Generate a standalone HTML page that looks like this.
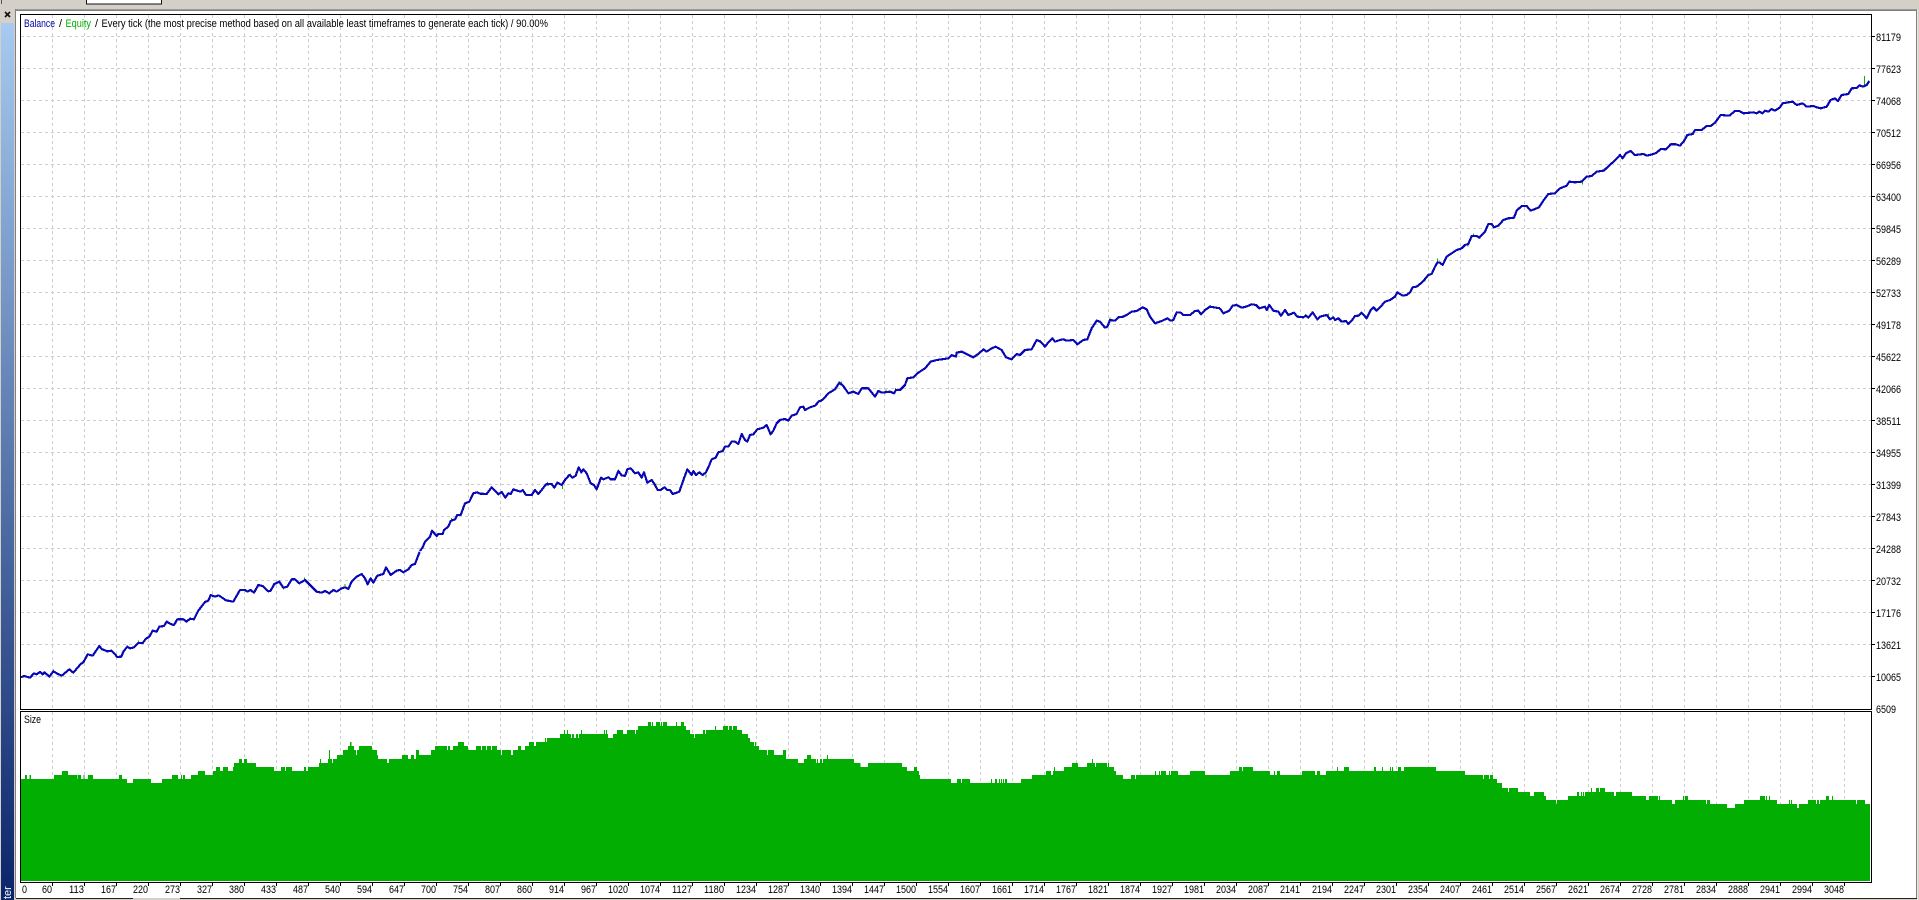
<!DOCTYPE html>
<html>
<head>
<meta charset="utf-8">
<title>Strategy Tester Graph</title>
<style>
html,body{margin:0;padding:0;background:#d4d0c8;overflow:hidden}
svg{display:block;position:absolute;left:0;top:0}
text{font-family:"Liberation Sans",sans-serif;font-size:11px;fill:#000}
</style>
</head>
<body>
<svg width="1919" height="900" viewBox="0 0 1919 900" xmlns="http://www.w3.org/2000/svg">
<defs>
<linearGradient id="cap" x1="0" y1="0" x2="0" y2="1">
<stop offset="0" stop-color="#a6caf0"/>
<stop offset="1" stop-color="#0a246a"/>
</linearGradient>
</defs>
<rect width="1919" height="900" fill="#d4d0c8"/>
<!-- top tab -->
<rect x="86.5" y="-2" width="75" height="6" fill="#fff" stroke="#111" stroke-width="1"/>
<rect x="1" y="0" width="1" height="4" fill="#555"/>
<!-- sidebar -->
<rect x="1" y="23" width="13" height="877" fill="url(#cap)"/>
<path d="M5 12l5 5m0-5l-5 5" stroke="#111" stroke-width="1.6" fill="none"/>
<text transform="translate(11 899) rotate(-90)" style="fill:#fff;font-size:11px">ter</text>
<!-- main white frame -->
<rect x="16" y="11" width="1900" height="887" fill="#fff"/>
<rect x="15" y="9" width="1902" height="1" fill="#9a9a9a"/>
<rect x="15" y="10" width="1902" height="1" fill="#808080"/>
<rect x="15" y="9" width="1" height="889" fill="#808080"/>
<rect x="1916" y="9" width="1" height="889" fill="#808080"/>
<rect x="1917" y="9" width="1" height="891" fill="#ece9e2"/>
<rect x="16" y="898" width="117" height="1" fill="#222"/>
<rect x="180" y="898" width="1737" height="1" fill="#222"/>
<!-- grid -->
<g fill="none" stroke="#cdcdcd" stroke-width="1" stroke-dasharray="3 3" shape-rendering="crispEdges">
<path d="M21 36.5h1850m-1850 32h1850m-1850 32h1850m-1850 32h1850m-1850 32h1850m-1850 32h1850m-1850 32h1850m-1850 32h1850m-1850 32h1850m-1850 32h1850m-1850 32h1850m-1850 32h1850m-1850 32h1850m-1850 32h1850m-1850 32h1850m-1850 32h1850m-1850 32h1850m-1850 32h1850m-1850 32h1850m-1850 32h1850m-1850 32h1850"/>
<path d="M52.5 15v694m32-694v694m32-694v694m32-694v694m32-694v694m32-694v694m32-694v694m32-694v694m32-694v694m32-694v694m32-694v694m32-694v694m32-694v694m32-694v694m32-694v694m32-694v694m32-694v694m32-694v694m32-694v694m32-694v694m32-694v694m32-694v694m32-694v694m32-694v694m32-694v694m32-694v694m32-694v694m32-694v694m32-694v694m32-694v694m32-694v694m32-694v694m32-694v694m32-694v694m32-694v694m32-694v694m32-694v694m32-694v694m32-694v694m32-694v694m32-694v694m32-694v694m32-694v694m32-694v694m32-694v694m32-694v694m32-694v694m32-694v694m32-694v694m32-694v694m32-694v694m32-694v694m32-694v694m32-694v694m32-694v694m32-694v694"/>
<path d="M52.5 712v169m32-169v169m32-169v169m32-169v169m32-169v169m32-169v169m32-169v169m32-169v169m32-169v169m32-169v169m32-169v169m32-169v169m32-169v169m32-169v169m32-169v169m32-169v169m32-169v169m32-169v169m32-169v169m32-169v169m32-169v169m32-169v169m32-169v169m32-169v169m32-169v169m32-169v169m32-169v169m32-169v169m32-169v169m32-169v169m32-169v169m32-169v169m32-169v169m32-169v169m32-169v169m32-169v169m32-169v169m32-169v169m32-169v169m32-169v169m32-169v169m32-169v169m32-169v169m32-169v169m32-169v169m32-169v169m32-169v169m32-169v169m32-169v169m32-169v169m32-169v169m32-169v169m32-169v169m32-169v169m32-169v169m32-169v169m32-169v169"/>
</g>
<!-- green size histogram -->
<g fill="#02ae02" shape-rendering="crispEdges">
<path transform="translate(0 640) scale(.33333)" d="M62 417H75V405H81V417H88V405H93V417H162V405H186V393H204V405H232V417H234V405H243V417H250V405H254V417H264V405H279V417H357V405H366V417H381V429H399V417H453V429H486V417H516V405H534V417H543V405H546V417H549V405H555V417H573V405H594V393H615V405H639V393H648V381H660V393H669V381H684V393H699V381H702V369H717V357H726V369H732V357H741V369H768V381H822V393H843V381H855V393H858V381H876V393H912V381H918V393H924V381H957V369H960V357H963V369H984V357H987V330H990V357H996V369H999V357H1011V345H1029V330H1044V318H1050V306H1055V318H1062V330H1068V345H1071V330H1077V318H1116V330H1131V345H1134V357H1161V369H1167V357H1206V345H1224V357H1233V345H1242V357H1248V330H1257V345H1272V345H1293V330H1305V318H1341V330H1344V318H1350V330H1359V318H1374V306H1392V318H1404V330H1428V318H1441V723H62Z"/>
<path transform="translate(480 710) scale(.33333)" d="M0 108H3V120H6V108H18V120H21V108H33V120H36V108H51V120H63V135H66V120H93V135H99V120H114V108H123V120H135V108H147V96H162V108H168V96H195V84H198V96H201V84H240V72H252V60H255V72H261V60H264V72H273V84H276V72H282V84H288V72H294V84H297V72H303V60H306V72H372V60H375V72H378V60H381V72H384V84H399V72H411V60H429V72H441V60H465V72H468V60H474V48H504V36H513V48H516V36H519V48H528V36H540V48H543V36H546V48H549V36H561V48H588V36H591V48H603V36H612V48H618V60H630V72H642V84H645V72H669V60H675V72H678V60H705V48H708V60H729V48H744V60H747V48H756V60H759V48H771V60H786V72H804V84H810V96H822V108H825V96H828V108H837V120H861V135H864V120H882V135H909V120H918V147H954V159H972V147H981V135H993V147H1008V159H1011V147H1014V159H1020V147H1026V159H1029V147H1041V135H1044V147H1122V159H1141V513H0Z"/>
<path transform="translate(860 710) scale(.33333)" d="M0 171H24V159H126V171H141V183H162V171H171V183H177V195H180V207H273V219H291V207H303V219H306V207H330V219H393V207H396V219H405V207H411V219H417V207H420V219H423V207H426V219H429V207H432V219H435V207H441V219H483V207H516V195H558V183H573V195H579V183H582V171H585V183H612V171H636V159H654V171H681V159H696V147H699V159H705V171H708V159H741V171H744V159H747V171H762V183H768V195H789V207H813V195H825V207H828V195H885V183H888V195H897V183H900V195H903V183H918V195H927V183H930V195H933V183H954V195H990V183H1035V195H1110V183H1137V171H1141V513H0Z"/>
<path transform="translate(1240 710) scale(.33333)" d="M0 171H6V183H9V171H39V183H90V195H102V183H105V195H111V183H120V195H186V183H225V195H231V183H240V195H258V183H291V171H294V183H312V171H327V183H402V171H408V183H426V171H429V183H450V171H453V183H456V171H459V183H474V171H483V183H492V171H588V183H675V195H729V207H732V195H747V207H750V195H759V207H771V219H786V234H804V246H807V234H834V246H870V258H882V246H912V258H918V270H948V282H951V270H984V258H1011V246H1017V258H1023V246H1026V258H1029V246H1032V258H1035V246H1053V234H1056V246H1068V234H1077V246H1080V234H1095V246H1122V258H1128V246H1141V513H0Z"/>
<path transform="translate(1600 680) scale(.33333)" d="M0 324H15V336H42V348H48V336H96V348H138V360H147V348H174V360H177V348H180V360H216V372H225V360H249V348H252V360H255V348H264V360H318V372H321V360H330V372H381V384H405V372H432V360H480V348H495V360H498V348H501V360H507V348H510V360H531V372H567V360H570V372H573V360H576V372H591V384H597V372H624V360H648V372H651V360H657V372H660V360H678V348H687V360H696V348H699V360H768V372H771V360H795V372H810V603H0Z"/>
</g>
<!-- equity ticks -->
<g fill="none" stroke="#04b004" stroke-width="3" shape-rendering="crispEdges">
<path transform="translate(20 540) scale(.33333)" d="M100 388v8M123 404v8M245 324v8M355 302v8M853 113v10M975 132v10M790 140v8"/>
<path transform="translate(420 390) scale(.33333)" d="M94 384v8M382 276v8M427 288v9M436 264v8M452 250v8M596 238v8M708 280v8M782 286v8M858 254v8"/>
<path transform="translate(820 300) scale(.33333)" d="M65 244v8M198 268v8M226 264v8M662 120v8M870 52v8M1170 15v8"/>
<path transform="translate(1220 170) scale(.33333)" d="M50 400v8M256 432v8M325 430v8M652 266v10M615 326v8M686 252v8M744 222v8M760 190v8M816 160v8M1087 34v9"/>
<path transform="translate(1600 0) scale(.33333)" d="M793 228v30"/>
</g>
<!-- balance line -->
<g fill="none" stroke="#0808b4" stroke-width="6.5" stroke-linejoin="round" shape-rendering="crispEdges">
<polyline transform="translate(20 540) scale(.33333)" points="3,412 12,408 30,413 42,400 50,403 60,396 68,403 74,397 88,410 100,394 110,400 125,407 148,388 160,398 182,372 190,367 203,343 218,347 238,318 245,327 262,334 275,332 292,351 304,350 310,335 322,320 330,325 342,322 355,309 368,309 378,296 388,290 398,272 410,275 418,260 432,258 440,245 452,252 462,255 472,238 490,238 500,245 510,236 522,238 535,212 555,186 565,182 572,165 585,170 596,166 605,172 618,181 640,185 660,150 675,150 682,155 692,150 702,158 715,135 728,138 745,154 752,152 763,132 778,125 790,143 802,140 815,118 825,118 838,130 855,120 865,130 880,145 890,155 905,158 915,153 928,160 940,150 950,155 965,145 975,142 985,147 995,125 1010,110 1025,102 1035,115 1043,133 1052,115 1060,128 1072,107 1090,102 1098,82 1112,105 1130,92 1140,90 1150,97 1165,88 1175,75 1185,72 1198,38 1200,36"/>
<polyline transform="translate(420 390) scale(.33333)" points="0,483 8,472 15,455 30,440 36,422 50,438 55,432 68,432 72,420 85,410 92,393 105,388 112,375 122,375 135,340 148,335 160,310 172,307 180,311 200,312 215,292 225,302 235,313 245,306 256,323 265,310 272,312 280,298 292,302 302,305 308,300 318,315 335,315 345,300 355,312 365,300 378,283 395,282 403,293 412,278 425,285 435,270 448,255 458,263 467,257 476,232 484,247 490,238 500,250 512,280 522,285 530,298 543,263 550,268 565,262 572,268 585,268 595,243 605,256 615,258 622,238 632,235 645,250 655,247 665,263 672,247 682,278 695,270 705,285 713,300 722,300 733,292 742,300 750,300 758,312 770,308 778,305 785,285 793,262 802,238 815,255 820,243 828,255 838,247 848,255 858,247 868,225 875,208 887,203 895,187 908,183 915,170 925,170 935,155 945,155 955,162 965,132 975,150 982,155 990,135 1000,133 1012,118 1030,113 1040,105 1052,133 1060,122 1070,100 1080,90 1095,87 1105,92 1115,77 1130,72 1140,52 1150,50 1155,60 1170,52 1185,47 1198,33 1200,33"/>
<polyline transform="translate(820 300) scale(.33333)" points="0,305 12,295 25,280 45,268 58,248 70,258 85,280 100,275 115,282 125,265 145,265 165,290 175,273 185,278 210,275 222,280 228,270 240,270 255,255 262,235 280,232 295,218 315,205 332,185 350,180 365,178 385,175 395,165 408,170 410,158 425,155 445,165 460,172 475,162 490,148 500,155 515,145 527,140 545,150 558,172 575,178 590,162 600,165 615,150 635,148 650,120 662,125 675,140 685,127 697,115 705,125 720,120 730,118 740,122 760,120 772,133 790,120 802,118 815,85 830,62 840,65 855,83 862,80 870,60 885,62 895,52 910,50 920,45 935,35 950,33 968,22 980,28 990,50 1005,70 1025,63 1042,55 1052,62 1060,60 1070,37 1082,38 1090,45 1110,45 1125,33 1135,32 1143,43 1155,30 1170,20 1200,25"/>
<polyline transform="translate(1220 170) scale(.33333)" points="0,415 10,430 28,422 38,407 50,405 65,413 78,410 95,403 108,405 118,415 135,410 140,420 148,405 160,422 175,425 183,437 195,420 205,435 222,428 232,440 250,442 258,437 265,443 278,427 292,448 300,440 320,435 330,448 340,442 345,450 355,445 365,455 378,453 385,462 395,452 405,438 415,437 425,428 440,445 452,420 460,412 470,422 480,412 495,395 510,390 525,380 532,367 548,377 560,375 570,367 578,352 590,350 605,338 615,327 625,315 635,312 645,290 652,278 660,278 668,285 680,260 695,250 710,240 725,235 735,225 745,222 755,198 770,198 778,203 795,185 805,162 815,162 822,172 835,167 850,150 865,145 882,143 890,122 905,108 920,108 932,122 945,117 957,112 970,92 985,72 1005,70 1020,55 1040,47 1048,35 1065,37 1085,35 1100,20 1115,18 1130,5 1150,2 1155,0"/>
<polyline transform="translate(1600 0) scale(.33333)" points="10,513 48,478 60,465 68,475 78,460 92,453 105,465 130,462 140,467 160,462 170,458 182,447 198,448 212,433 228,433 240,437 252,423 262,405 278,402 285,390 305,390 320,378 332,378 345,368 362,345 388,347 405,333 418,333 430,340 460,337 470,340 478,335 488,340 495,332 505,335 515,327 525,332 540,322 548,310 565,307 578,305 590,315 608,310 620,320 640,318 650,322 662,325 680,320 692,300 705,295 714,303 725,285 745,282 755,265 770,264 778,256 790,260 800,255 808,243"/>
</g>
<!-- borders -->
<g fill="none" stroke="#000" stroke-width="1" shape-rendering="crispEdges">
<rect x="20.5" y="14.5" width="1851" height="695"/>
<rect x="20.5" y="711.5" width="1851" height="171"/>
<path d="M1872 36.5h3m-3 32h3m-3 32h3m-3 32h3m-3 32h3m-3 32h3m-3 32h3m-3 32h3m-3 32h3m-3 32h3m-3 32h3m-3 32h3m-3 32h3m-3 32h3m-3 32h3m-3 32h3m-3 32h3m-3 32h3m-3 32h3m-3 32h3m-3 32h3"/>
<path d="M52.5 883v3m32-3v3m32-3v3m32-3v3m32-3v3m32-3v3m32-3v3m32-3v3m32-3v3m32-3v3m32-3v3m32-3v3m32-3v3m32-3v3m32-3v3m32-3v3m32-3v3m32-3v3m32-3v3m32-3v3m32-3v3m32-3v3m32-3v3m32-3v3m32-3v3m32-3v3m32-3v3m32-3v3m32-3v3m32-3v3m32-3v3m32-3v3m32-3v3m32-3v3m32-3v3m32-3v3m32-3v3m32-3v3m32-3v3m32-3v3m32-3v3m32-3v3m32-3v3m32-3v3m32-3v3m32-3v3m32-3v3m32-3v3m32-3v3m32-3v3m32-3v3m32-3v3m32-3v3m32-3v3m32-3v3m32-3v3m32-3v3"/>
</g>
<!-- header text -->
<text x="24" y="27" textLength="31" lengthAdjust="spacingAndGlyphs" style="fill:#0000a8">Balance</text>
<text x="59" y="27">/</text>
<text x="65.5" y="27" textLength="25.5" lengthAdjust="spacingAndGlyphs" style="fill:#00b000">Equity</text>
<text x="95" y="27">/</text>
<text x="101.5" y="27" textLength="446.5" lengthAdjust="spacingAndGlyphs">Every tick (the most precise method based on all available least timeframes to generate each tick) / 90.00%</text>
<text x="24" y="723" textLength="17" lengthAdjust="spacingAndGlyphs">Size</text>
<!-- y axis -->
<g>
<text x="1876" y="41" textLength="25" lengthAdjust="spacingAndGlyphs">81179</text>
<text x="1876" y="73" textLength="25" lengthAdjust="spacingAndGlyphs">77623</text>
<text x="1876" y="105" textLength="25" lengthAdjust="spacingAndGlyphs">74068</text>
<text x="1876" y="137" textLength="25" lengthAdjust="spacingAndGlyphs">70512</text>
<text x="1876" y="169" textLength="25" lengthAdjust="spacingAndGlyphs">66956</text>
<text x="1876" y="201" textLength="25" lengthAdjust="spacingAndGlyphs">63400</text>
<text x="1876" y="233" textLength="25" lengthAdjust="spacingAndGlyphs">59845</text>
<text x="1876" y="265" textLength="25" lengthAdjust="spacingAndGlyphs">56289</text>
<text x="1876" y="297" textLength="25" lengthAdjust="spacingAndGlyphs">52733</text>
<text x="1876" y="329" textLength="25" lengthAdjust="spacingAndGlyphs">49178</text>
<text x="1876" y="361" textLength="25" lengthAdjust="spacingAndGlyphs">45622</text>
<text x="1876" y="393" textLength="25" lengthAdjust="spacingAndGlyphs">42066</text>
<text x="1876" y="425" textLength="25" lengthAdjust="spacingAndGlyphs">38511</text>
<text x="1876" y="457" textLength="25" lengthAdjust="spacingAndGlyphs">34955</text>
<text x="1876" y="489" textLength="25" lengthAdjust="spacingAndGlyphs">31399</text>
<text x="1876" y="521" textLength="25" lengthAdjust="spacingAndGlyphs">27843</text>
<text x="1876" y="553" textLength="25" lengthAdjust="spacingAndGlyphs">24288</text>
<text x="1876" y="585" textLength="25" lengthAdjust="spacingAndGlyphs">20732</text>
<text x="1876" y="617" textLength="25" lengthAdjust="spacingAndGlyphs">17176</text>
<text x="1876" y="649" textLength="25" lengthAdjust="spacingAndGlyphs">13621</text>
<text x="1876" y="681" textLength="25" lengthAdjust="spacingAndGlyphs">10065</text>
<text x="1876" y="713" textLength="20" lengthAdjust="spacingAndGlyphs">6509</text>
</g>
<!-- x axis -->
<g>
<text x="22" y="893" textLength="5" lengthAdjust="spacingAndGlyphs">0</text>
<text x="42" y="893" textLength="10" lengthAdjust="spacingAndGlyphs">60</text>
<text x="69" y="893" textLength="15" lengthAdjust="spacingAndGlyphs">113</text>
<text x="101" y="893" textLength="15" lengthAdjust="spacingAndGlyphs">167</text>
<text x="133" y="893" textLength="15" lengthAdjust="spacingAndGlyphs">220</text>
<text x="165" y="893" textLength="15" lengthAdjust="spacingAndGlyphs">273</text>
<text x="197" y="893" textLength="15" lengthAdjust="spacingAndGlyphs">327</text>
<text x="229" y="893" textLength="15" lengthAdjust="spacingAndGlyphs">380</text>
<text x="261" y="893" textLength="15" lengthAdjust="spacingAndGlyphs">433</text>
<text x="293" y="893" textLength="15" lengthAdjust="spacingAndGlyphs">487</text>
<text x="325" y="893" textLength="15" lengthAdjust="spacingAndGlyphs">540</text>
<text x="357" y="893" textLength="15" lengthAdjust="spacingAndGlyphs">594</text>
<text x="389" y="893" textLength="15" lengthAdjust="spacingAndGlyphs">647</text>
<text x="421" y="893" textLength="15" lengthAdjust="spacingAndGlyphs">700</text>
<text x="453" y="893" textLength="15" lengthAdjust="spacingAndGlyphs">754</text>
<text x="485" y="893" textLength="15" lengthAdjust="spacingAndGlyphs">807</text>
<text x="517" y="893" textLength="15" lengthAdjust="spacingAndGlyphs">860</text>
<text x="549" y="893" textLength="15" lengthAdjust="spacingAndGlyphs">914</text>
<text x="581" y="893" textLength="15" lengthAdjust="spacingAndGlyphs">967</text>
<text x="608" y="893" textLength="20" lengthAdjust="spacingAndGlyphs">1020</text>
<text x="640" y="893" textLength="20" lengthAdjust="spacingAndGlyphs">1074</text>
<text x="672" y="893" textLength="20" lengthAdjust="spacingAndGlyphs">1127</text>
<text x="704" y="893" textLength="20" lengthAdjust="spacingAndGlyphs">1180</text>
<text x="736" y="893" textLength="20" lengthAdjust="spacingAndGlyphs">1234</text>
<text x="768" y="893" textLength="20" lengthAdjust="spacingAndGlyphs">1287</text>
<text x="800" y="893" textLength="20" lengthAdjust="spacingAndGlyphs">1340</text>
<text x="832" y="893" textLength="20" lengthAdjust="spacingAndGlyphs">1394</text>
<text x="864" y="893" textLength="20" lengthAdjust="spacingAndGlyphs">1447</text>
<text x="896" y="893" textLength="20" lengthAdjust="spacingAndGlyphs">1500</text>
<text x="928" y="893" textLength="20" lengthAdjust="spacingAndGlyphs">1554</text>
<text x="960" y="893" textLength="20" lengthAdjust="spacingAndGlyphs">1607</text>
<text x="992" y="893" textLength="20" lengthAdjust="spacingAndGlyphs">1661</text>
<text x="1024" y="893" textLength="20" lengthAdjust="spacingAndGlyphs">1714</text>
<text x="1056" y="893" textLength="20" lengthAdjust="spacingAndGlyphs">1767</text>
<text x="1088" y="893" textLength="20" lengthAdjust="spacingAndGlyphs">1821</text>
<text x="1120" y="893" textLength="20" lengthAdjust="spacingAndGlyphs">1874</text>
<text x="1152" y="893" textLength="20" lengthAdjust="spacingAndGlyphs">1927</text>
<text x="1184" y="893" textLength="20" lengthAdjust="spacingAndGlyphs">1981</text>
<text x="1216" y="893" textLength="20" lengthAdjust="spacingAndGlyphs">2034</text>
<text x="1248" y="893" textLength="20" lengthAdjust="spacingAndGlyphs">2087</text>
<text x="1280" y="893" textLength="20" lengthAdjust="spacingAndGlyphs">2141</text>
<text x="1312" y="893" textLength="20" lengthAdjust="spacingAndGlyphs">2194</text>
<text x="1344" y="893" textLength="20" lengthAdjust="spacingAndGlyphs">2247</text>
<text x="1376" y="893" textLength="20" lengthAdjust="spacingAndGlyphs">2301</text>
<text x="1408" y="893" textLength="20" lengthAdjust="spacingAndGlyphs">2354</text>
<text x="1440" y="893" textLength="20" lengthAdjust="spacingAndGlyphs">2407</text>
<text x="1472" y="893" textLength="20" lengthAdjust="spacingAndGlyphs">2461</text>
<text x="1504" y="893" textLength="20" lengthAdjust="spacingAndGlyphs">2514</text>
<text x="1536" y="893" textLength="20" lengthAdjust="spacingAndGlyphs">2567</text>
<text x="1568" y="893" textLength="20" lengthAdjust="spacingAndGlyphs">2621</text>
<text x="1600" y="893" textLength="20" lengthAdjust="spacingAndGlyphs">2674</text>
<text x="1632" y="893" textLength="20" lengthAdjust="spacingAndGlyphs">2728</text>
<text x="1664" y="893" textLength="20" lengthAdjust="spacingAndGlyphs">2781</text>
<text x="1696" y="893" textLength="20" lengthAdjust="spacingAndGlyphs">2834</text>
<text x="1728" y="893" textLength="20" lengthAdjust="spacingAndGlyphs">2888</text>
<text x="1760" y="893" textLength="20" lengthAdjust="spacingAndGlyphs">2941</text>
<text x="1792" y="893" textLength="20" lengthAdjust="spacingAndGlyphs">2994</text>
<text x="1824" y="893" textLength="20" lengthAdjust="spacingAndGlyphs">3048</text>
</g>
</svg>
</body>
</html>
